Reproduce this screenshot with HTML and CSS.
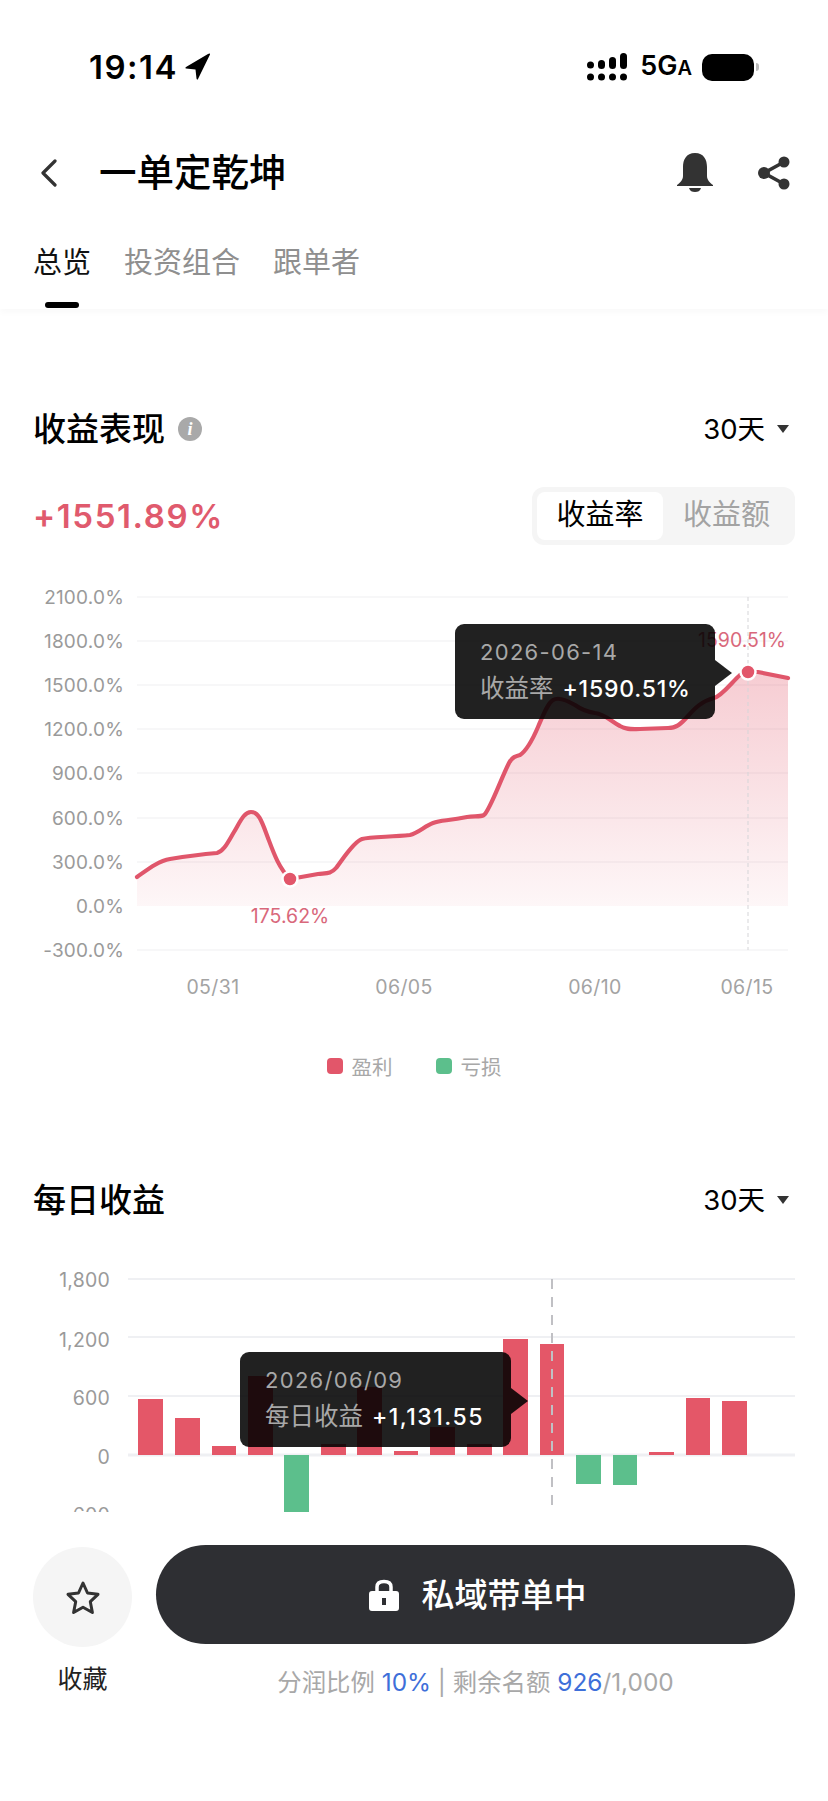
FILE: index.html
```html
<!DOCTYPE html>
<html lang="zh-CN">
<head>
    <meta charset="UTF-8">
    <meta name="viewport" content="width=device-width, initial-scale=1.0">
    <title>一单定乾坤</title>
    <link rel="stylesheet" href="styles.css">
</head>
<body>

<main class="main">
    <!-- Status bar -->
    <div class="status">
        <div class="status-left">
            <span class="time">19:14</span>
            <svg class="loc" width="28" height="28" viewBox="0 0 28 28">
                <path d="M26 1.500 L14 26 Q13 27.500 12.500 25.500 L11.500 16.500 L2 15.500 Q0.500 15 2 14 L24 1 Q26.500 0 26 1.500 Z" fill="#000"/>
            </svg>
        </div>
        <div class="status-right">
            <svg width="40" height="30" viewBox="0 0 40 30">
                <circle cx="3.500" cy="13" r="3.500"/>
                <rect x="11" y="8" width="7" height="9" rx="3.500"/>
                <rect x="22" y="5" width="7" height="12" rx="3.500"/>
                <rect x="33" y="1" width="7" height="16" rx="3.500"/>
                <circle cx="3.500" cy="25" r="3.500"/>
                <circle cx="14.500" cy="25" r="3.500"/>
                <circle cx="25.500" cy="25" r="3.500"/>
                <circle cx="36.500" cy="25" r="3.500"/>
            </svg>
            <span class="net">5G<small>A</small></span>
            <span class="battery"></span>
            <span class="battery-nub"></span>
        </div>
    </div>

    <!-- Title row -->
    <header class="nav">
        <svg class="back" width="18" height="28" viewBox="0 0 18 28">
            <path d="M15 2 L3 14 L15 26" fill="none" stroke="#333" stroke-width="3.200" stroke-linecap="round" stroke-linejoin="round"/>
        </svg>
        <h1 class="title">一单定乾坤</h1>
        <svg class="bell" width="36" height="40" viewBox="0 0 36 40">
            <path d="M18 0 C27 0 30 7 30 14 L30 23 C30 27 33 30 36 32 L36 33 L0 33 L0 32 C3 30 6 27 6 23 L6 14 C6 7 9 0 18 0 Z" fill="#333"/>
            <path d="M12 35 L24 35 C23 38 21 39 18 39 C15 39 13 38 12 35 Z" fill="#333"/>
        </svg>
        <svg class="share" width="32" height="34" viewBox="0 0 32 34">
            <path d="M26 6 L6 17 L26 28" fill="none" stroke="#333" stroke-width="3.500"/>
            <circle cx="26" cy="6" r="5.500" fill="#333"/>
            <circle cx="6" cy="17" r="6" fill="#333"/>
            <circle cx="26" cy="28" r="5.500" fill="#333"/>
        </svg>
    </header>

    <nav class="tabs">
        <a class="tab active">总览</a>
        <a class="tab">投资组合</a>
        <a class="tab">跟单者</a>
    </nav>

    <!-- Return chart -->
    <section class="perf">
        <div class="sec-head">
            <h2 class="sec-title">收益表现</h2>
            <span class="info">i</span>
            <span class="range">30天<i class="caret"></i></span>
        </div>
        <div class="perf-row">
            <span class="perf-value">+1551.89%</span>
            <div class="segment">
                <span class="seg active">收益率</span>
                <span class="seg">收益额</span>
            </div>
        </div>
    </section>

    <div class="chart chart-line">
        <svg width="828" height="420" viewBox="0 580 828 420">
            <defs>
                <linearGradient id="areaFill" gradientUnits="userSpaceOnUse" x1="0" y1="672" x2="0" y2="906">
                    <stop offset="0" stop-color="#e2566a" stop-opacity="0.3"/>
                    <stop offset="1" stop-color="#e2566a" stop-opacity="0.05"/>
                </linearGradient>
            </defs>
            <g class="grid">
                <line x1="137" x2="788" y1="597" y2="597"/>
                <line x1="137" x2="788" y1="641" y2="641"/>
                <line x1="137" x2="788" y1="685" y2="685"/>
                <line x1="137" x2="788" y1="729" y2="729"/>
                <line x1="137" x2="788" y1="773" y2="773"/>
                <line x1="137" x2="788" y1="818" y2="818"/>
                <line x1="137" x2="788" y1="862" y2="862"/>
                <line x1="137" x2="788" y1="950" y2="950"/>
            </g>
            <g class="axis-y">
                <text x="124" y="604">2100.0%</text>
                <text x="124" y="648">1800.0%</text>
                <text x="124" y="692">1500.0%</text>
                <text x="124" y="736">1200.0%</text>
                <text x="124" y="780">900.0%</text>
                <text x="124" y="825">600.0%</text>
                <text x="124" y="869">300.0%</text>
                <text x="124" y="913">0.0%</text>
                <text x="124" y="957">-300.0%</text>
            </g>
            <g class="axis-x">
                <text x="213" y="994">05/31</text>
                <text x="404" y="994">06/05</text>
                <text x="595" y="994">06/10</text>
                <text x="747" y="994">06/15</text>
            </g>
            <path class="area" d="M137 877 C147 870 158 861 170 859 S205 854 217 853 C224 851 228 842 234 832 S244 812 251 812 C259 812 262 822 268 838 S279 868 290 879 L318 874 C326 873 331 874 336 868 S353 842 362 839 C370 837 390 837 410 835 C418 833 425 826 433 823 S447 821 467 817 C475 816 480 817 484 815 C490 810 500 781 509 763 C512 757 516 756 520 755 C526 751 532 741 538 727 C544 713 548 703 553 700 C558 697 565 699 575 705 C582 710 588 712 595 713 C605 714 612 722 620 726 C627 730 632 729 640 729 L668 728 C676 728 680 725 688 716 C695 708 702 701 714 698 C722 696 732 682 740 675 L748 672 L758 672 L788 678 L788 906 L137 906 Z"/>
            <path class="line" d="M137 877 C147 870 158 861 170 859 S205 854 217 853 C224 851 228 842 234 832 S244 812 251 812 C259 812 262 822 268 838 S279 868 290 879 L318 874 C326 873 331 874 336 868 S353 842 362 839 C370 837 390 837 410 835 C418 833 425 826 433 823 S447 821 467 817 C475 816 480 817 484 815 C490 810 500 781 509 763 C512 757 516 756 520 755 C526 751 532 741 538 727 C544 713 548 703 553 700 C558 697 565 699 575 705 C582 710 588 712 595 713 C605 714 612 722 620 726 C627 730 632 729 640 729 L668 728 C676 728 680 725 688 716 C695 708 702 701 714 698 C722 696 732 682 740 675 L748 672 L758 672 L788 678"/>
            <line class="cross" x1="748" x2="748" y1="597" y2="950"/>
            <circle class="dot" cx="290" cy="879" r="7.500"/>
            <circle class="dot" cx="748" cy="672" r="7.500"/>
            <text class="peak" x="290" y="923">175.62%</text>
            <text class="peak" x="742" y="647">1590.51%</text>
        </svg>
        <div class="tip tip-line">
            <div class="tip-date">2026-06-14</div>
            <div class="tip-row">收益率 <b>+1590.51%</b></div>
        </div>
    </div>

    <div class="legend">
        <span class="key"><i class="swatch red"></i>盈利</span>
        <span class="key"><i class="swatch green"></i>亏损</span>
    </div>

    <!-- Daily chart, cut off by the bottom bar -->
    <section class="daily">
        <div class="sec-head">
            <h2 class="sec-title">每日收益</h2>
            <span class="range">30天<i class="caret"></i></span>
        </div>
    </section>

    <div class="chart chart-bar">
        <svg width="828" height="252" viewBox="0 1260 828 252">
            <g class="grid-bar">
                <line x1="128" x2="795" y1="1279" y2="1279"/>
                <line x1="128" x2="795" y1="1337" y2="1337"/>
                <line x1="128" x2="795" y1="1396" y2="1396"/>
                <line class="zero" x1="128" x2="795" y1="1455" y2="1455"/>
            </g>
            <g class="axis-bar">
                <text x="110" y="1287">1,800</text>
                <text x="110" y="1347">1,200</text>
                <text x="110" y="1405">600</text>
                <text x="110" y="1464">0</text>
                <text x="110" y="1522">-600</text>
            </g>
            <g class="bars-up">
                <rect x="138" y="1399" width="25" height="56"/>
                <rect x="175" y="1418" width="25" height="37"/>
                <rect x="212" y="1446" width="24" height="9"/>
                <rect x="248" y="1376" width="25" height="79"/>
                <rect x="321" y="1444" width="25" height="11"/>
                <rect x="357" y="1387" width="25" height="68"/>
                <rect x="394" y="1451" width="24" height="4"/>
                <rect x="430" y="1427" width="25" height="28"/>
                <rect x="467" y="1444" width="25" height="11"/>
                <rect x="503" y="1339" width="25" height="116"/>
                <rect x="540" y="1344" width="24" height="111"/>
                <rect x="649" y="1452" width="25" height="3"/>
                <rect x="686" y="1398" width="24" height="57"/>
                <rect x="722" y="1401" width="25" height="54"/>
            </g>
            <g class="bars-down">
                <rect x="284" y="1455" width="25" height="57"/>
                <rect x="576" y="1455" width="25" height="29"/>
                <rect x="613" y="1455" width="24" height="30"/>
            </g>
            <line class="cross-bar" x1="552" x2="552" y1="1279" y2="1512"/>
        </svg>
        <div class="tip tip-bar">
            <div class="tip-date">2026/06/09</div>
            <div class="tip-row">每日收益 <b>+1,131.55</b></div>
        </div>
    </div>
</main>

<!-- Bottom bar -->
<footer class="footer">
    <div class="fav">
        <span class="fav-circle">
            <svg width="36" height="36" viewBox="0 0 36 36">
                <path d="M18 3 L22.500 13 L33 14.300 L25.300 21.700 L27.400 32.500 L18 27.200 L8.600 32.500 L10.700 21.700 L3 14.300 L13.500 13 Z" fill="none" stroke="#333" stroke-width="3" stroke-linejoin="round"/>
            </svg>
        </span>
        <span class="fav-label">收藏</span>
    </div>
    <div class="cta">
        <button class="btn">
            <svg width="30" height="32" viewBox="0 0 30 32">
                <path d="M8 14 L8 8 C8 4 11 2.500 15 2.500 C19 2.500 22 4 22 8 L22 14" fill="none" stroke="#fff" stroke-width="3.500"/>
                <path fill-rule="evenodd" d="M3 12 L27 12 Q30 12 30 15 L30 29 Q30 32 27 32 L3 32 Q0 32 0 29 L0 15 Q0 12 3 12 Z M13 19 L13 26 L17 26 L17 19 Z" fill="#fff"/>
            </svg>
            <span class="btn-text">私域带单中</span>
        </button>
        <p class="note">分润比例 <em>10%</em> | 剩余名额 <em>926</em>/1,000</p>
    </div>
</footer>

</body>
</html>
```

FILE: styles.css
```css
* {
    box-sizing: border-box;
}
body {
    margin: 0;
    width: 828px;
    height: 1801px;
    overflow: hidden;
    background-color: #fff;
    color: #000;
    font-family: Inter, "Noto Sans CJK SC", sans-serif;
}
h1, h2, p {
    margin: 0;
    font-weight: 500;
}
svg {
    display: block;
}
.main {
    height: 1512px;
    overflow: hidden;
}

/* status bar */
.status {
    height: 134px;
    display: flex;
    justify-content: space-between;
    align-items: center;
    padding: 0 69px 0 89px;
}
.status-left {
    display: flex;
    align-items: center;
    gap: 6px;
}
.time {
    font-size: 33px;
    font-weight: 600;
    letter-spacing: 1.5px;
}
.status-right {
    display: flex;
    align-items: center;
}
.net {
    margin-left: 13px;
    margin-right: 10px;
    font-size: 27px;
    font-weight: 600;
    line-height: 28px;
}
.net small {
    font-size: 20px;
}
.battery {
    width: 52px;
    height: 27px;
    border-radius: 10px;
    background-color: #000;
}
.battery-nub {
    width: 3px;
    height: 8px;
    margin-left: 2px;
    border-radius: 0 3px 3px 0;
    background-color: #bbb;
}

/* title row */
.nav {
    height: 78px;
    display: flex;
    align-items: center;
    padding: 0 38px 0 40px;
}
.title {
    flex: 1;
    margin-left: 41px;
    font-size: 37.500px;
    line-height: 46px;
    font-weight: 500;
}
.bell {
    margin-right: 45px;
}
.tabs {
    height: 97px;
    display: flex;
    gap: 33px;
    padding: 36px 33px 0;
    box-shadow: 0 4px 6px rgba(0, 0, 0, 0.025);
}
.tab {
    font-size: 29px;
    line-height: 30px;
    color: #8f8f8f;
}
.tab.active {
    color: #111;
}
.tab.active::after {
    content: "";
    display: block;
    width: 34px;
    height: 6px;
    margin: 24px auto 0;
    border-radius: 3px;
    background-color: #000;
}

/* section heads */
.perf {
    padding: 100px 33px 0;
}
.daily {
    padding: 0 33px;
    margin-top: 99px;
}
.sec-head {
    height: 40px;
    display: flex;
    align-items: center;
}
.sec-title {
    font-size: 33px;
    line-height: 40px;
}
.info {
    width: 24px;
    height: 24px;
    margin-left: 13px;
    border-radius: 50%;
    background-color: #a9a9a9;
    color: #fff;
    font-family: "Liberation Serif", serif;
    font-size: 18px;
    font-style: italic;
    font-weight: 700;
    line-height: 24px;
    text-align: center;
}
.range {
    margin-left: auto;
    display: flex;
    align-items: center;
    font-size: 27.500px;
    line-height: 40px;
}
.caret {
    width: 0;
    height: 0;
    margin-left: 12px;
    margin-right: 6px;
    border-left: 6px solid transparent;
    border-right: 6px solid transparent;
    border-top: 8px solid #333;
}
.perf-row {
    margin-top: 38px;
    display: flex;
    justify-content: space-between;
    align-items: center;
}
.perf-value {
    font-size: 33px;
    font-weight: 600;
    letter-spacing: 1.600px;
    color: #e05a6d;
}
.segment {
    display: flex;
    width: 263px;
    height: 58px;
    padding: 5px;
    border-radius: 12px;
    background-color: #f5f5f5;
}
.seg {
    flex: 1;
    border-radius: 8px;
    font-size: 29px;
    line-height: 46px;
    text-align: center;
    color: #a3a3a3;
}
.seg.active {
    flex: none;
    width: 126px;
    background-color: #fff;
    color: #000;
}

/* charts */
.chart {
    position: relative;
}
.chart-line {
    height: 420px;
    margin-top: 35px;
}
.chart-bar {
    height: 252px;
    margin-top: 40px;
}
.grid line {
    stroke: #f5f5f6;
    stroke-width: 1.500;
}
.grid-bar line {
    stroke: #eff0f3;
    stroke-width: 2;
}
.grid-bar .zero {
    stroke-width: 3;
}
.axis-y text, .axis-bar text {
    text-anchor: end;
    fill: #9a9a9a;
    font-size: 19px;
    letter-spacing: 0.2px;
}
.axis-bar text {
    font-size: 19.500px;
}
.axis-x text {
    text-anchor: middle;
    fill: #a3a3a3;
    font-size: 19.500px;
    letter-spacing: 0.4px;
}
.area {
    fill: url(#areaFill);
}
.line {
    fill: none;
    stroke: #e0566b;
    stroke-width: 4.200;
    stroke-linecap: round;
    stroke-linejoin: round;
}
.cross {
    stroke: #d5d5d8;
    stroke-width: 1;
    stroke-dasharray: 4 3;
}
.cross-bar {
    stroke: #c0c0c4;
    stroke-width: 2;
    stroke-dasharray: 10 8;
}
.dot {
    fill: #e2566a;
    stroke: #fff;
    stroke-width: 2.500;
}
.peak {
    text-anchor: middle;
    fill: #d9687b;
    font-size: 19.500px;
}
.bars-up rect {
    fill: #e45768;
}
.bars-down rect {
    fill: #5cbf8c;
}

/* tooltips lie over the chart */
.tip {
    position: absolute;
    height: 95px;
    padding-left: 25px;
    border-radius: 9px;
    background-color: rgba(0, 0, 0, 0.87);
    color: #a8a8a8;
    font-size: 22px;
}
.tip::after {
    content: "";
    position: absolute;
    left: 100%;
    top: 36px;
    border-top: 13px solid transparent;
    border-bottom: 13px solid transparent;
    border-left: 17px solid rgba(0, 0, 0, 0.87);
}
.tip b {
    margin-left: 2px;
    font-weight: 500;
    color: #fff;
}
.tip-date {
    margin-top: 13px;
    line-height: 30px;
    letter-spacing: 1.300px;
}
.tip-row {
    margin-top: 4px;
    line-height: 34px;
    font-size: 24.500px;
}
.tip-row b {
    font-size: 23px;
    letter-spacing: 0.8px;
}
.tip-line {
    left: 455px;
    top: 44px;
    width: 260px;
}
.tip-bar {
    left: 240px;
    top: 92px;
    width: 271px;
}
.tip-bar b {
    letter-spacing: 1.500px;
}

/* legend */
.legend {
    margin-top: 51px;
    height: 30px;
    display: flex;
    justify-content: center;
    gap: 43px;
}
.key {
    display: flex;
    align-items: center;
    gap: 9px;
    font-size: 20.500px;
    color: #a8a8a8;
}
.swatch {
    width: 16px;
    height: 16px;
    border-radius: 4px;
}
.swatch.red {
    background-color: #e2566a;
}
.swatch.green {
    background-color: #5cbf8c;
}

/* bottom bar */
.footer {
    height: 289px;
    padding: 33px 33px 0;
    display: grid;
    grid-template-columns: 99px 639px;
    gap: 24px;
    background-color: #fff;
}
.fav {
    display: flex;
    flex-direction: column;
    align-items: center;
}
.fav-circle {
    width: 99px;
    height: 100px;
    margin-top: 2px;
    display: flex;
    align-items: center;
    justify-content: center;
    border-radius: 50%;
    background-color: #f5f5f5;
}
.fav-circle svg {
    margin-top: 2px;
}
.fav-label {
    margin-top: 16px;
    font-size: 25px;
    line-height: 32px;
    color: #222;
}
.btn {
    width: 100%;
    height: 99px;
    display: flex;
    align-items: center;
    justify-content: center;
    gap: 23px;
    padding: 0 0 0 4px;
    border: none;
    border-radius: 50px;
    background-color: #2e2f33;
    color: #fff;
    font-family: inherit;
    font-size: 33px;
    font-weight: 500;
}
.btn-text {
    margin-bottom: 4px;
}
.note {
    margin-top: 22px;
    font-size: 24.400px;
    line-height: 32px;
    font-weight: 400;
    text-align: center;
    color: #a8a8a8;
}
.note em {
    font-style: normal;
    color: #3e6fd9;
}
```
